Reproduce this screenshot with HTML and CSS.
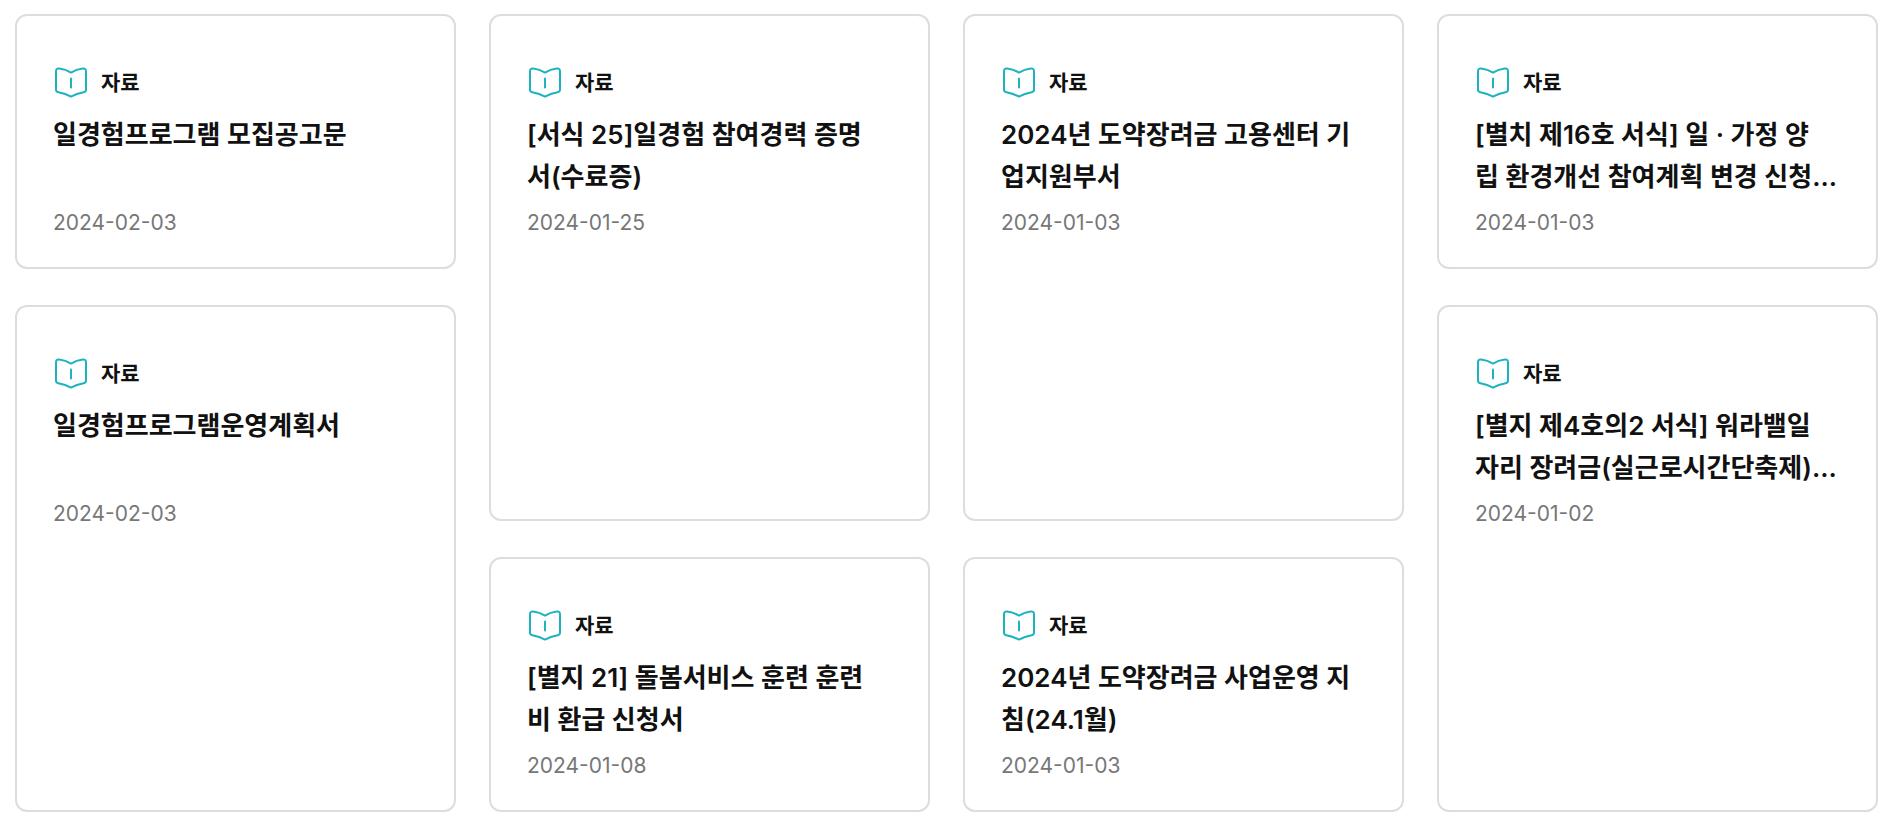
FILE: index.html
```html
<!DOCTYPE html>
<html lang="ko">
<head>
  <meta charset="UTF-8" />
  <meta name="viewport" content="width=device-width, initial-scale=1.0"/>
  <title>자료</title>
  <link rel="stylesheet" href="styles.css">
</head>
<body>

  <!-- shared book icon -->
  <svg class="sprite" aria-hidden="true">
    <symbol id="book" viewBox="0 -1 36 36">
      <path d="M18 8.6 C14.5 6.4 10.5 5 6.2 4.5 C4.2 4.3 3 5.4 3 7.2 V25.4 C3 27.2 3.8 27.9 5.4 28.2 C10 29.1 14 30.4 18 32.6 C22 30.4 26 29.1 30.6 28.2 C32.2 27.9 33 27.2 33 25.4 V7.2 C33 5.4 31.8 4.3 29.8 4.5 C25.5 5 21.5 6.4 18 8.6 Z"/>
      <path d="M18 14.4 V23.4"/>
    </symbol>
  </svg>

  <ul class="cards">
    <li class="card">
      <a href="#">
        <span class="type"><svg class="icon"><use href="#book"/></svg>자료</span>
        <strong class="title">일경험프로그램 모집공고문</strong>
        <span class="date">2024-02-03</span>
      </a>
    </li>
    <li class="card tall">
      <a href="#">
        <span class="type"><svg class="icon"><use href="#book"/></svg>자료</span>
        <strong class="title">[서식 25]일경험 참여경력 증명<br>서(수료증)</strong>
        <span class="date">2024-01-25</span>
      </a>
    </li>
    <li class="card tall">
      <a href="#">
        <span class="type"><svg class="icon"><use href="#book"/></svg>자료</span>
        <strong class="title">2024년 도약장려금 고용센터 기<br>업지원부서</strong>
        <span class="date">2024-01-03</span>
      </a>
    </li>
    <li class="card">
      <a href="#">
        <span class="type"><svg class="icon"><use href="#book"/></svg>자료</span>
        <strong class="title">[별치 제16호 서식] 일 · 가정 양<br>립 환경개선 참여계획 변경 신청...</strong>
        <span class="date">2024-01-03</span>
      </a>
    </li>
    <li class="card tall">
      <a href="#">
        <span class="type"><svg class="icon"><use href="#book"/></svg>자료</span>
        <strong class="title">일경험프로그램운영계획서</strong>
        <span class="date">2024-02-03</span>
      </a>
    </li>
    <li class="card tall">
      <a href="#">
        <span class="type"><svg class="icon"><use href="#book"/></svg>자료</span>
        <strong class="title">[별지 제4호의2 서식] 워라밸일<br>자리 장려금(실근로시간단축제)...</strong>
        <span class="date">2024-01-02</span>
      </a>
    </li>
    <li class="card">
      <a href="#">
        <span class="type"><svg class="icon"><use href="#book"/></svg>자료</span>
        <strong class="title">[별지 21] 돌봄서비스 훈련 훈련<br>비 환급 신청서</strong>
        <span class="date">2024-01-08</span>
      </a>
    </li>
    <li class="card">
      <a href="#">
        <span class="type"><svg class="icon"><use href="#book"/></svg>자료</span>
        <strong class="title">2024년 도약장려금 사업운영 지<br>침(24.1월)</strong>
        <span class="date">2024-01-03</span>
      </a>
    </li>
  </ul>

</body>
</html>
```

FILE: styles.css
```css
* {
  box-sizing: border-box;
}
body {
  margin: 0;
  background: #fff;
  color: #111;
  font-family: Inter, "Noto Sans CJK KR", sans-serif;
}
.sprite {
  display: none;
}
.cards {
  display: grid;
  grid-template-columns: repeat(4, 1fr);
  grid-template-rows: auto 216px auto;
  gap: 36px 33px;
  margin: 0;
  padding: 14px 15px 11px;
  list-style: none;
}
.card {
  border: 2px solid #ddd;
  border-radius: 12px;
}
.tall {
  grid-row-end: span 2;
}
.card a {
  display: block;
  padding: 47px 36px 29px;
  color: inherit;
  text-decoration: none;
}
.type {
  display: flex;
  align-items: center;
  gap: 12px;
  height: 36px;
  font-size: 21px;
  font-weight: 600;
}
.icon {
  width: 36px;
  height: 36px;
  fill: none;
  stroke: #1cb3c0;
  stroke-width: 2;
  stroke-linecap: round;
  stroke-linejoin: round;
}
.title {
  display: block;
  min-height: 84px;
  margin: 15px 0 10px;
  font-size: 26px;
  font-weight: 600;
  line-height: 42px;
  word-break: break-all;
}
.date {
  display: block;
  color: #777;
  font-size: 21px;
  line-height: 30px;
}
@media (max-width: 1200px) {
  .cards {
    grid-template-columns: repeat(2, 1fr);
    grid-template-rows: none;
  }
  .tall {
    grid-row-end: auto;
  }
}
@media (max-width: 640px) {
  .cards {
    grid-template-columns: 1fr;
  }
}
```
